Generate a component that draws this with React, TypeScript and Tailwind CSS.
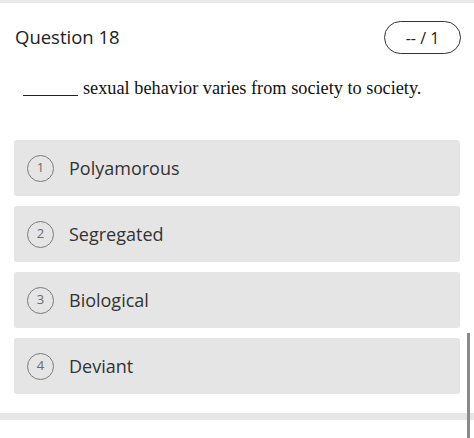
const OPTIONS = ["Polyamorous", "Segregated", "Biological", "Deviant"];

export default function App() {
  return (
    <div className="relative w-[474px] h-[438px] overflow-hidden bg-white text-[#222]" style={{ fontFamily: '"Open Sans", sans-serif' }}>
      <div className="h-[3px] bg-[#e9e9e9]" />

      <div className="mt-[18px] flex items-center justify-between pl-[15px] pr-[13px]">
        <h1 className="text-[18.5px] font-medium leading-none text-[#222]">Question 18</h1>
        <div className="flex h-[33px] w-[77px] items-center justify-center rounded-full border border-[#333] text-[16px] text-[#222]">
          -- / 1
        </div>
      </div>

      <p className="mt-[24px] pl-[23px] text-[18.3px] leading-[20px] text-[#111]" style={{ fontFamily: '"Liberation Serif", serif' }}>
        <span className="inline-block w-[55px] border-b border-[#222] align-[-2px]" />
        <span className="ml-[5px]">sexual behavior varies from society to society.</span>
      </p>

      <div className="mt-[42px] flex flex-col gap-[10px] pl-[14px] pr-[14px]">
        {OPTIONS.map((opt, i) => (
          <div key={opt} className="flex h-[56px] items-center rounded-[3px] bg-[#e5e5e5] pl-[13px]">
            <div className="flex h-[27px] w-[27px] items-center justify-center rounded-full border-[1.5px] border-[#7a7a7a] text-[13px] text-[#6a6a6a]">
              {i + 1}
            </div>
            <span className="ml-[15px] text-[18px] text-[#333]">{opt}</span>
          </div>
        ))}
      </div>

      <div className="mt-[19px] h-[7px] bg-[#e6e6e6]" />

      <div className="absolute left-[467px] top-[333px] h-[105px] w-[3px] bg-[#8a8a8a]" />
    </div>
  );
}
